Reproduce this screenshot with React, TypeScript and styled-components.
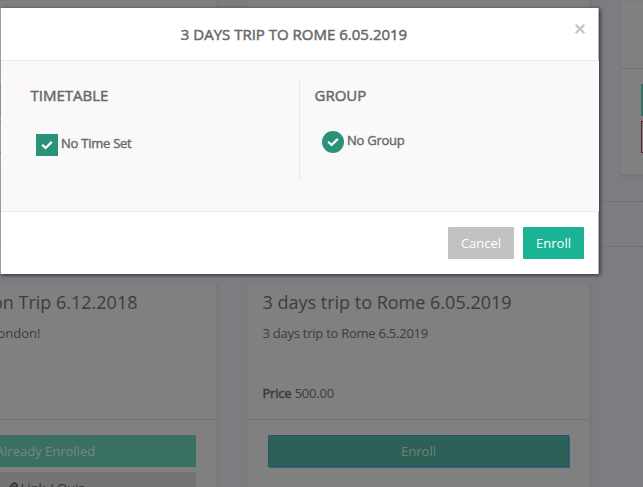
import React from "react";
import styled, { createGlobalStyle } from "styled-components";

const GlobalStyle = createGlobalStyle`
  * { box-sizing: border-box; }
  html, body { margin: 0; height: 100%; overflow: hidden; }
  body { font: 13px/18px "Open Sans", sans-serif; color: #3b3d40; background: #7b7d80; }
  h2, h3, p { margin: 0; }
  button { font: inherit; }
`;

const Page = styled.main`
  position: relative;
  width: 643px;
  height: 487px;
  overflow: hidden;
`;

const CourseRow = styled.section`
  display: grid;
  grid-template-columns: repeat(3, 343px);
  gap: 30px;
  margin-left: -126px;
`;

const Card = styled.article<{ $height: number }>`
  height: ${(p) => p.$height}px;
  background: #808080;
  border: 1px solid #7a7b7c;
  border-right-color: #7b7b7c;
  box-shadow: 1px 1px 2px #707173;
`;

const CardInfo = styled.div<{ $height: number }>`
  height: ${(p) => p.$height}px;
  padding: 5px 15px 0 14.5px;
  border-bottom: 1px solid #727374;
`;

const CardTitle = styled.h3<{ $width?: number }>`
  font-size: 18px;
  line-height: 24px;
  font-weight: 400;
  white-space: nowrap;
  width: ${(p) => (p.$width ? `${p.$width}px` : "auto")};
  text-align: ${(p) => (p.$width ? "right" : "left")};
`;

const CardText = styled.p<{ $width?: number }>`
  margin-top: 10px;
  height: 60px;
  white-space: nowrap;
  letter-spacing: ${(p) => (p.$width ? 0 : -0.25)}px;
  width: ${(p) => (p.$width ? `${p.$width}px` : "auto")};
  text-align: ${(p) => (p.$width ? "right" : "left")};
`;

const Price = styled.p`
  letter-spacing: -0.2px;
`;

const Strong = styled.span`
  -webkit-text-stroke: 0.5px currentColor;
`;

const CardActions = styled.div`
  display: flex;
  flex-direction: column;
  gap: 5px;
  padding: 15px 20px 0;
`;

const actionColors = {
  enrolled: "background: #3a7063; color: #7d8380;",
  enroll: "background: #2d6056; color: #718079; border: 1px solid #275766; box-shadow: 0 0 1px 0.5px #345d80;",
  link: "background: #747474; color: #343638;",
  leave: "background: #808080; border: 1px solid #681c26;",
};

const CardAction = styled.button<{ $kind: keyof typeof actionColors }>`
  display: flex;
  align-items: center;
  justify-content: center;
  gap: 3px;
  width: 100%;
  height: 32px;
  padding: 0;
  border: 0;
  ${(p) => actionColors[p.$kind]}
`;

const Band = styled.div`
  height: 46px;
  margin: 26px 0 37px;
  border-top: 1px dotted #686a6c;
  border-bottom: 1px dotted #686a6c;
`;

const Dialog = styled.section`
  position: absolute;
  top: 8px;
  left: 0;
  width: 599px;
  height: 266px;
  border-left: 1px solid rgba(255, 255, 255, 0.4);
  background: #fff;
  background-clip: padding-box;
  box-shadow: 1px 1px 4px rgba(0, 0, 0, 0.68);
  color: #676a6c;
`;

const DialogHeader = styled.header`
  position: relative;
  display: flex;
  align-items: center;
  justify-content: center;
  height: 53px;
  padding-right: 11px;
  border-bottom: 1px solid #e9ebeb;
  border-right: 1px solid #b4b5b5;
`;

const DialogTitle = styled.h2`
  font-size: 15px;
  line-height: 20px;
  font-weight: 400;
  -webkit-text-stroke: 0.5px currentColor;
  white-space: nowrap;
`;

const Close = styled.button`
  position: absolute;
  top: 16px;
  right: 12px;
  width: 11px;
  height: 10px;
  padding: 0;
  border: 0;
  background: none;
  svg { display: block; }
`;

const DialogBody = styled.div`
  display: grid;
  grid-template-columns: 299px 1fr;
  height: 151px;
  padding: 20px 0 30px;
  background: #faf8f9;
  border-bottom: 1px solid #e9ebeb;
`;

const Choice = styled.div<{ $kind: "time" | "group" }>`
  padding: 4px 0 0 ${(p) => (p.$kind === "time" ? 29.5 : 14.5)}px;
  border-right: ${(p) => (p.$kind === "time" ? "1px solid #e7eaec" : "0")};
`;

const Option = styled.label<{ $top: number; $left: number }>`
  display: flex;
  gap: 3px;
  margin: ${(p) => p.$top}px 0 0 ${(p) => p.$left}px;
  letter-spacing: -0.25px;
  -webkit-text-stroke: 0.4px currentColor;
  white-space: nowrap;
`;

const Mark = styled.span<{ $round?: boolean }>`
  display: grid;
  place-items: center;
  width: 22px;
  height: 22px;
  background: #2b917a;
  border-radius: ${(p) => (p.$round ? "50%" : "0")};
`;

const DialogFooter = styled.footer`
  display: flex;
  justify-content: flex-end;
  gap: 9px;
  height: 62px;
  padding: 15px 14px 0 0;
  border-right: 1px solid #b4b5b5;
`;

const FooterButton = styled.button<{ $primary?: boolean }>`
  width: ${(p) => (p.$primary ? 61 : 66)}px;
  height: 32px;
  padding: 0;
  border: 0;
  border-radius: 1px;
  color: #fff;
  background: ${(p) => (p.$primary ? "#1ab394" : "#c2c2c2")};
`;

const Check = () => (
  <svg width="12" height="10" viewBox="0 0 12 10" fill="none">
    <path d="M1.2 4.7 4.6 8 10.8 1.9" stroke="#fff" strokeWidth="2.2" />
  </svg>
);

const LinkIcon = () => (
  <svg width="11" height="12" viewBox="0 0 11 12" fill="none" stroke="currentColor" strokeWidth="2" strokeLinecap="round">
    <path d="M4 7.3C2.8 6 3.2 5 4.2 3.8L5.7 2.1C7.7.2 11 2.4 9.4 5L7.8 6.9" />
    <path d="M7 4.8C8.2 6 7.8 7 6.8 8.2L5.3 9.9C3.3 11.8 0 9.6 1.6 7L3 5.4" />
  </svg>
);

export default function App() {
  return (
    <>
      <GlobalStyle />
      <Page>
        <CourseRow>
          {[0, 1, 2].map((i) => (
            <Card key={i} $height={175}>
              <CardInfo $height={68} />
              <CardActions>
                <CardAction $kind="enrolled" />
                <CardAction $kind="leave" />
              </CardActions>
            </Card>
          ))}
        </CourseRow>
        <Band />
        <CourseRow>
          <Card $height={240}>
            <CardInfo $height={135}>
              <CardTitle $width={248}>London Trip 6.12.2018</CardTitle>
              <CardText $width={151}>Trip to London!</CardText>
            </CardInfo>
            <CardActions>
              <CardAction $kind="enrolled">Already Enrolled</CardAction>
              <CardAction $kind="link"><LinkIcon />Link / Quiz</CardAction>
            </CardActions>
          </Card>
          <Card $height={240}>
            <CardInfo $height={135}>
              <CardTitle>3 days trip to Rome 6.05.2019</CardTitle>
              <CardText>3 days trip to Rome 6.5.2019</CardText>
              <Price><Strong>Price</Strong> 500.00</Price>
            </CardInfo>
            <CardActions>
              <CardAction $kind="enroll">Enroll</CardAction>
            </CardActions>
          </Card>
        </CourseRow>
        <Dialog role="dialog">
          <DialogHeader>
            <DialogTitle>3 DAYS TRIP TO ROME 6.05.2019</DialogTitle>
            <Close aria-label="Close">
              <svg width="10" height="10" viewBox="0 0 10 10">
                <path d="M.8.8 9.2 9.2M9.2.8.8 9.2" stroke="#c8c8c8" strokeWidth="2.3" />
              </svg>
            </Close>
          </DialogHeader>
          <DialogBody>
            <Choice $kind="time">
              <DialogTitle>TIMETABLE</DialogTitle>
              <Option $top={29} $left={5.5}><Mark><Check /></Mark>No Time Set</Option>
            </Choice>
            <Choice $kind="group">
              <DialogTitle>GROUP</DialogTitle>
              <Option $top={26} $left={7.5}><Mark $round><Check /></Mark>No Group</Option>
            </Choice>
          </DialogBody>
          <DialogFooter>
            <FooterButton>Cancel</FooterButton>
            <FooterButton $primary>Enroll</FooterButton>
          </DialogFooter>
        </Dialog>
      </Page>
    </>
  );
}
